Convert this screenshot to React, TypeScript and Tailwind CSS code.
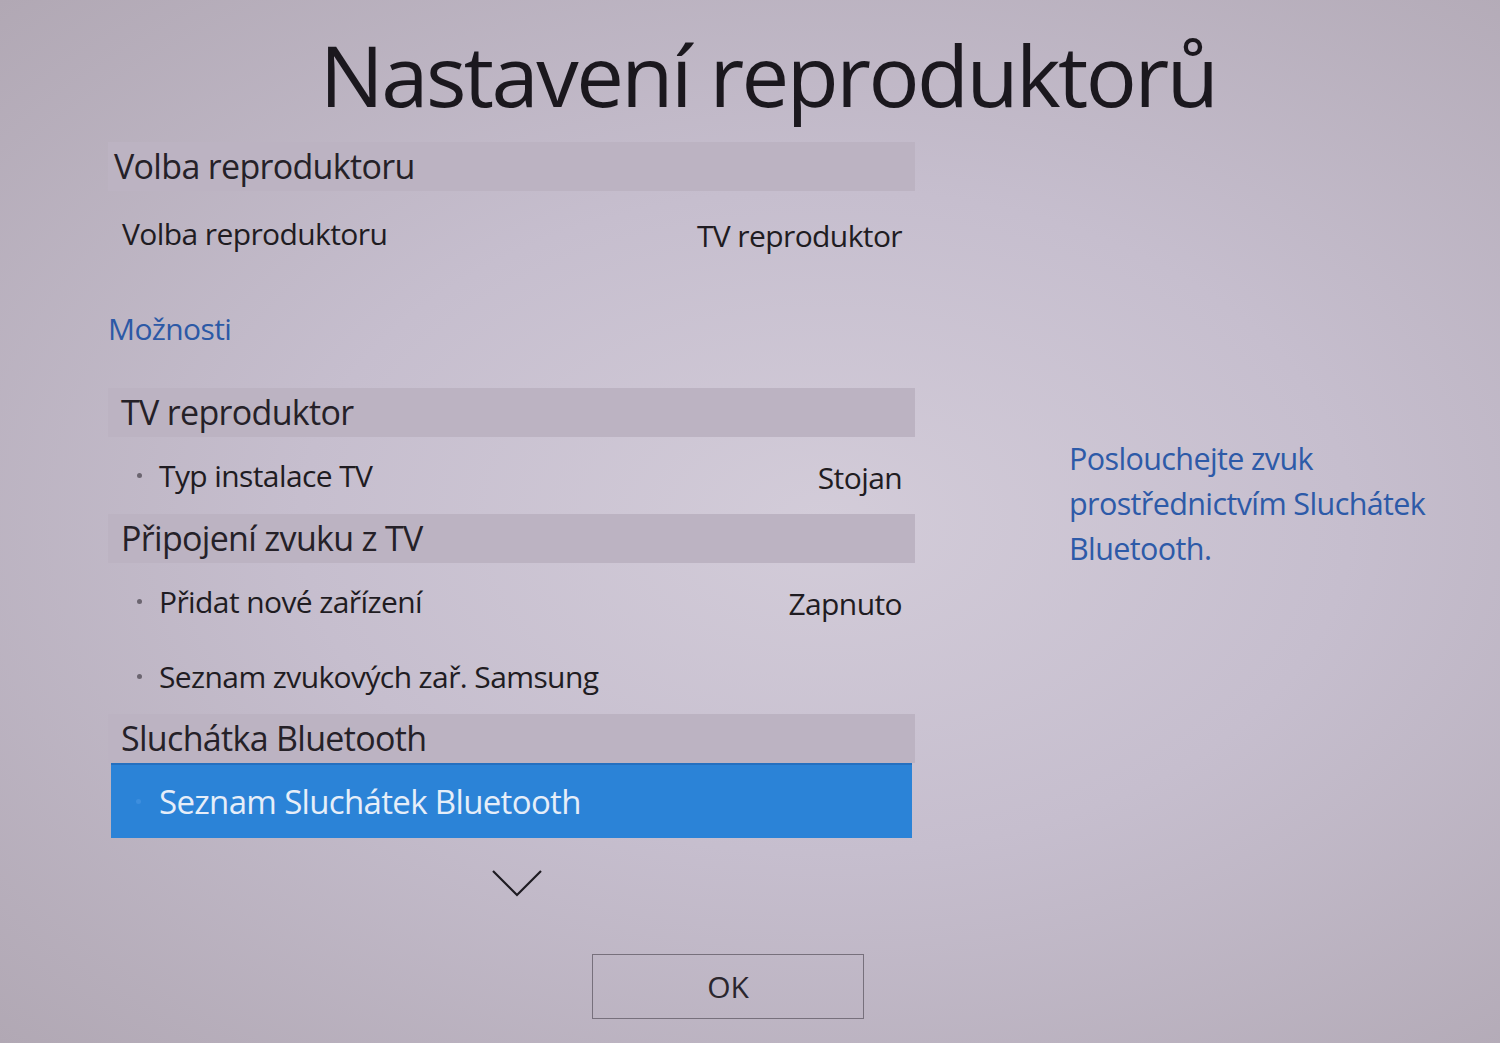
import React from "react"

type Item = { label: string; value?: string; bullet?: boolean; h: string }

function SectionBar({ title, inset = "pl-[13px]" }: { title: string; inset?: string }) {
  return (
    <div className={`h-[49px] bg-[#bcb3c2] flex items-center ${inset} text-[34px] text-[#252128] tracking-[-0.02em]`}>
      {title}
    </div>
  )
}

function Row({ item }: { item: Item }) {
  return (
    <div className={`${item.h} flex items-center justify-between pl-[14px] pr-[13px] text-[30px] text-[#1f1c22] tracking-[-0.02em]`}>
      <div className="flex items-center">
        {item.bullet && <span className="w-[5px] h-[5px] rounded-full bg-[#6b6570] ml-[15px] mr-[17px]" />}
        <span>{item.label}</span>
      </div>
      {item.value && <span className="mt-[4px]">{item.value}</span>}
    </div>
  )
}

export default function App() {
  return (
    <div
      className="w-[1500px] h-[1043px] overflow-hidden bg-[radial-gradient(ellipse_at_55%_50%,#d3ccd9_0%,#c6bece_45%,#b1a8b4_100%)] text-[#1f1c22]"
      style={{ fontFamily: '"Open Sans", "Noto Sans", sans-serif' }}
    >
      <h1 className="h-[142px] pt-[24px] pl-[36px] text-center text-[85px] leading-[100px] text-[#1b181e] tracking-[-0.03em]">
        Nastavení reproduktorů
      </h1>

      <div className="flex">
        <div className="ml-[108px] w-[807px]">
          <SectionBar title="Volba reproduktoru" inset="pl-[6px]" />
          <Row item={{ label: "Volba reproduktoru", value: "TV reproduktor", h: "h-[85px]" }} />
          <div className="h-[112px] pt-[30px] text-[30px] text-[#2c59a6] tracking-[-0.02em]">Možnosti</div>

          <SectionBar title="TV reproduktor" />
          <Row item={{ label: "Typ instalace TV", value: "Stojan", bullet: true, h: "h-[77px]" }} />

          <SectionBar title="Připojení zvuku z TV" />
          <Row item={{ label: "Přidat nové zařízení", value: "Zapnuto", bullet: true, h: "h-[76px]" }} />
          <Row item={{ label: "Seznam zvukových zař. Samsung", bullet: true, h: "h-[75px]" }} />

          <SectionBar title="Sluchátka Bluetooth" />
          <div className="h-[75px] ml-[3px] mr-[3px] bg-[#2b83d7] border-t-2 border-[#2470c0] flex items-center pl-[11px] text-[33px] text-[#e6eef9] tracking-[-0.02em]">
            <span className="w-[5px] h-[5px] rounded-full bg-[#3d8ede] ml-[14px] mr-[18px]" />
            Seznam Sluchátek Bluetooth
          </div>

          <div className="flex justify-center pt-[31px] pl-[10px]">
            <svg width="50" height="28" viewBox="0 0 50 28" fill="none">
              <polyline points="1,2 25,26 49,2" stroke="#1e1b22" strokeWidth="2.2" />
            </svg>
          </div>
        </div>

        <div className="ml-[154px] pt-[294px] w-[420px] text-[30.5px] leading-[45px] text-[#2d5aa8] tracking-[-0.02em]">
          Poslouchejte zvuk
          <br />
          prostřednictvím Sluchátek
          <br />
          Bluetooth.
        </div>
      </div>

      <div className="mt-[57px] ml-[592px] w-[272px] h-[65px] border border-[#77707c] flex items-center justify-center text-[30px] text-[#2a262d]">
        OK
      </div>
    </div>
  )
}
